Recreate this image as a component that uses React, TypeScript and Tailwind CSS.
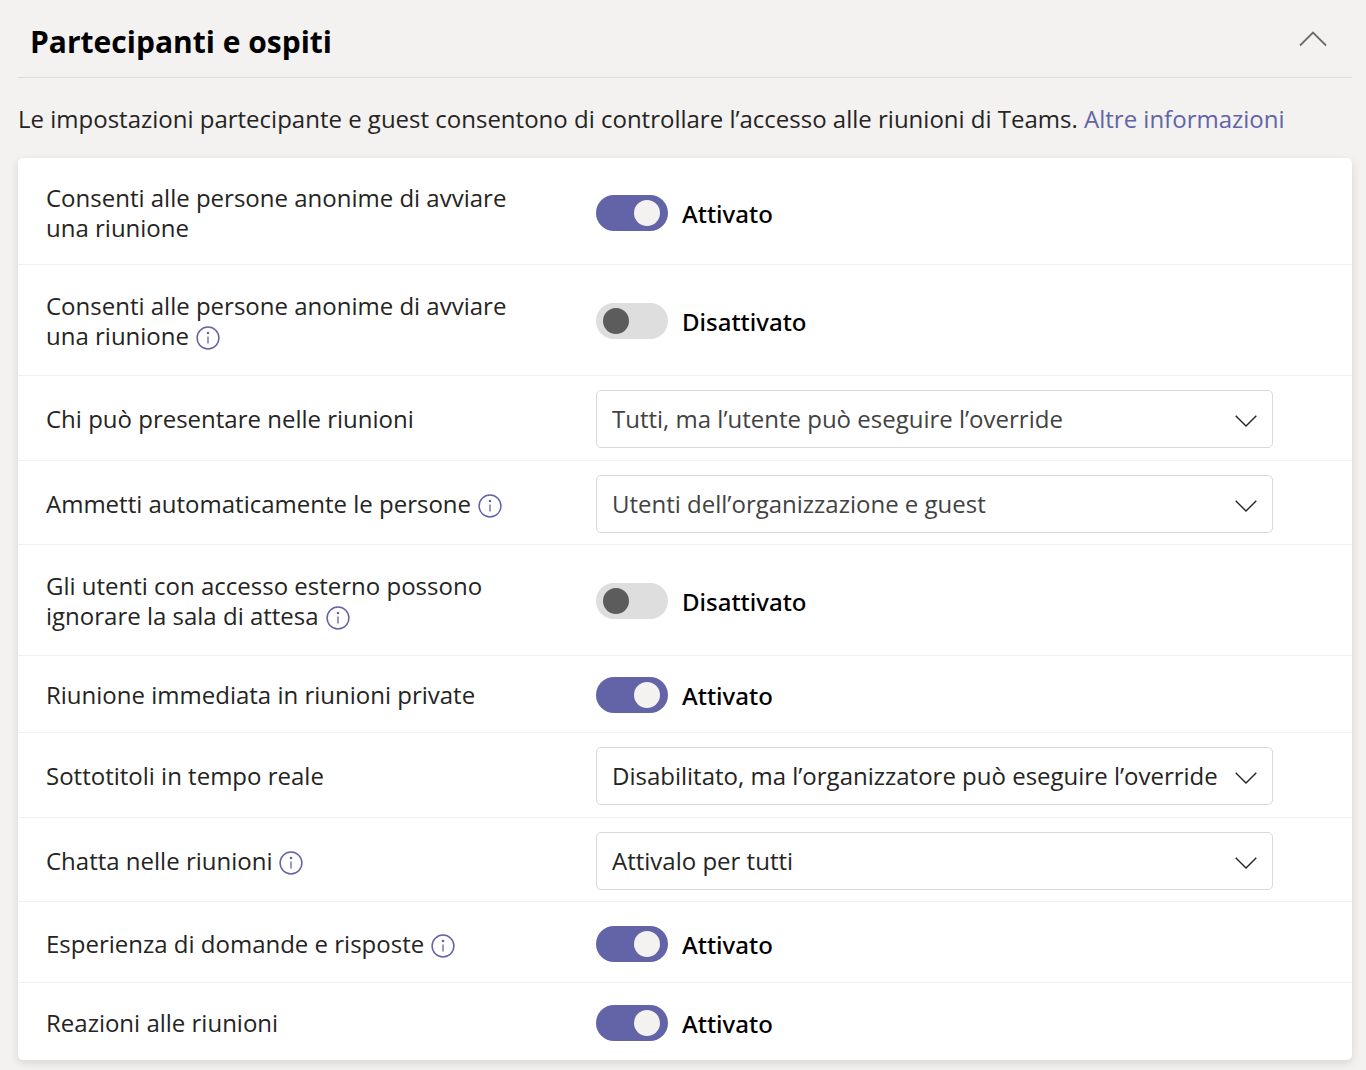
import { useState } from 'react';

interface Setting {
  id: string;
  label: string;
  info?: boolean;
  // a setting is either a switch or a list of choices
  enabled?: boolean;
  options?: string[];
  muted?: boolean;
  spacing: string;
}

const settings: Setting[] = [
  { id: 'anonymous-join', label: 'Consenti alle persone anonime di avviare una riunione', enabled: true, spacing: 'pt-[25px] pb-[21px]' },
  { id: 'anonymous-start', label: 'Consenti alle persone anonime di avviare una riunione', info: true, enabled: false, spacing: 'pt-[26px] pb-6' },
  { id: 'presenters', label: 'Chi può presentare nelle riunioni', options: ['Tutti, ma l’utente può eseguire l’override', 'Solo gli organizzatori'], muted: true, spacing: 'pt-3.5 pb-3' },
  { id: 'auto-admit', label: 'Ammetti automaticamente le persone', info: true, options: ['Utenti dell’organizzazione e guest', 'Tutti'], muted: true, spacing: 'pt-3.5 pb-[11px]' },
  { id: 'bypass-lobby', label: 'Gli utenti con accesso esterno possono ignorare la sala di attesa', info: true, enabled: false, spacing: 'pt-[26px] pb-6' },
  { id: 'meet-now', label: 'Riunione immediata in riunioni private', enabled: true, spacing: 'pt-[21px] pb-[19px]' },
  { id: 'captions', label: 'Sottotitoli in tempo reale', options: ['Disabilitato, ma l’organizzatore può eseguire l’override', 'Disabilitato'], spacing: 'pt-3.5 pb-3' },
  { id: 'chat', label: 'Chatta nelle riunioni', info: true, options: ['Attivalo per tutti', 'Disattivalo per tutti'], spacing: 'pt-3.5 pb-[11px]' },
  { id: 'qna', label: 'Esperienza di domande e risposte', info: true, enabled: true, spacing: 'pt-6 pb-5' },
  { id: 'reactions', label: 'Reazioni alle riunioni', enabled: true, spacing: 'pt-[22px] pb-[19px]' },
];

function InfoButton({ label }: { label: string }) {
  return (
    <button type="button" aria-label={`Informazioni: ${label}`} className="ml-[7px] inline-block align-[-5px] leading-none text-[#6264a7]">
      <svg width="24" height="24" viewBox="0 0 24 24" fill="none" stroke="currentColor" className="block">
        <circle cx="12" cy="12" r="10.9" strokeWidth="1.5" />
        <path d="M12 10.5v7" strokeWidth="1.3" />
        <circle cx="12" cy="7" r="1.3" fill="currentColor" stroke="none" />
      </svg>
    </button>
  );
}

function Toggle({ id, initial }: { id: string; initial: boolean }) {
  const [on, setOn] = useState(initial);

  return (
    <div className="flex items-center gap-3.5">
      <input
        id={id}
        type="checkbox"
        role="switch"
        checked={on}
        onChange={(e) => setOn(e.target.checked)}
        className="flex h-9 w-[72px] shrink-0 cursor-pointer appearance-none items-start rounded-full bg-[#dedede] pt-[5px] pr-2 pl-[7px] before:size-[26px] before:rounded-full before:bg-[#5c5c5c] checked:justify-end checked:bg-[#6264a7] checked:before:bg-[#f3f2f1]"
      />
      <span className="pt-0.5 font-['Noto_Sans',sans-serif] font-medium text-black">{on ? 'Attivato' : 'Disattivato'}</span>
    </div>
  );
}

function Dropdown({ id, options, muted }: { id: string; options: string[]; muted?: boolean }) {
  return (
    <div className="relative">
      <select
        id={id}
        className={`block h-[58px] w-full appearance-none rounded-[5px] border border-[#d9d9d9] bg-white pr-12 pl-[15px] ${muted ? 'text-[#424242]' : 'text-[#252423]'}`}
      >
        {options.map((option) => (
          <option key={option}>{option}</option>
        ))}
      </select>
      <svg width="22" height="12" viewBox="0 0 22 12" fill="none" stroke="#252423" strokeWidth="1.4" className="pointer-events-none absolute top-[25px] right-4">
        <path d="M0.7 0.7L11 11L21.3 0.7" />
      </svg>
    </div>
  );
}

export default function App() {
  const [open, setOpen] = useState(true);

  return (
    <main className="min-h-screen bg-[#f3f2f1] pr-3.5 pb-2.5 pl-[18px] font-['Open_Sans',sans-serif] text-2xl leading-[30px] text-[#252423]">
      <header className="flex items-start justify-between border-b border-[#dddcdb] pt-[22px] pr-[25px] pb-[15px] pl-3">
        <h1 className="text-[30px] leading-10 font-bold text-black">Partecipanti e ospiti</h1>
        <button type="button" aria-label="Comprimi sezione" aria-expanded={open} onClick={() => setOpen(!open)} className="pt-[9px]">
          <svg width="28" height="16" viewBox="0 0 28 16" fill="none" stroke="#6b6b6b" strokeWidth="1.8" className={open ? '' : 'rotate-180'}>
            <path d="M1 14.5L14 1.5L27 14.5" />
          </svg>
        </button>
      </header>

      {open && (
        <>
          <p className="pt-[26px] pb-6">
            Le impostazioni partecipante e guest consentono di controllare l’accesso alle riunioni di Teams.{' '}
            <a href="#info" className="text-[#6264a7]">Altre informazioni</a>
          </p>

          <section className="divide-y divide-[#f0f0f0] rounded-[5px] bg-white shadow-[0_3px_10px_rgba(0,0,0,0.12)]">
            {settings.map((s) => (
              <div key={s.id} className={`grid grid-cols-[550fr_677fr] items-center pr-[79px] pl-7 ${s.spacing}`}>
                <div className="max-w-[480px]">
                  <label htmlFor={s.id}>{s.label}</label>
                  {s.info && <InfoButton label={s.label} />}
                </div>
                {s.options ? (
                  <Dropdown id={s.id} options={s.options} muted={s.muted} />
                ) : (
                  <Toggle id={s.id} initial={!!s.enabled} />
                )}
              </div>
            ))}
          </section>
        </>
      )}
    </main>
  );
}
